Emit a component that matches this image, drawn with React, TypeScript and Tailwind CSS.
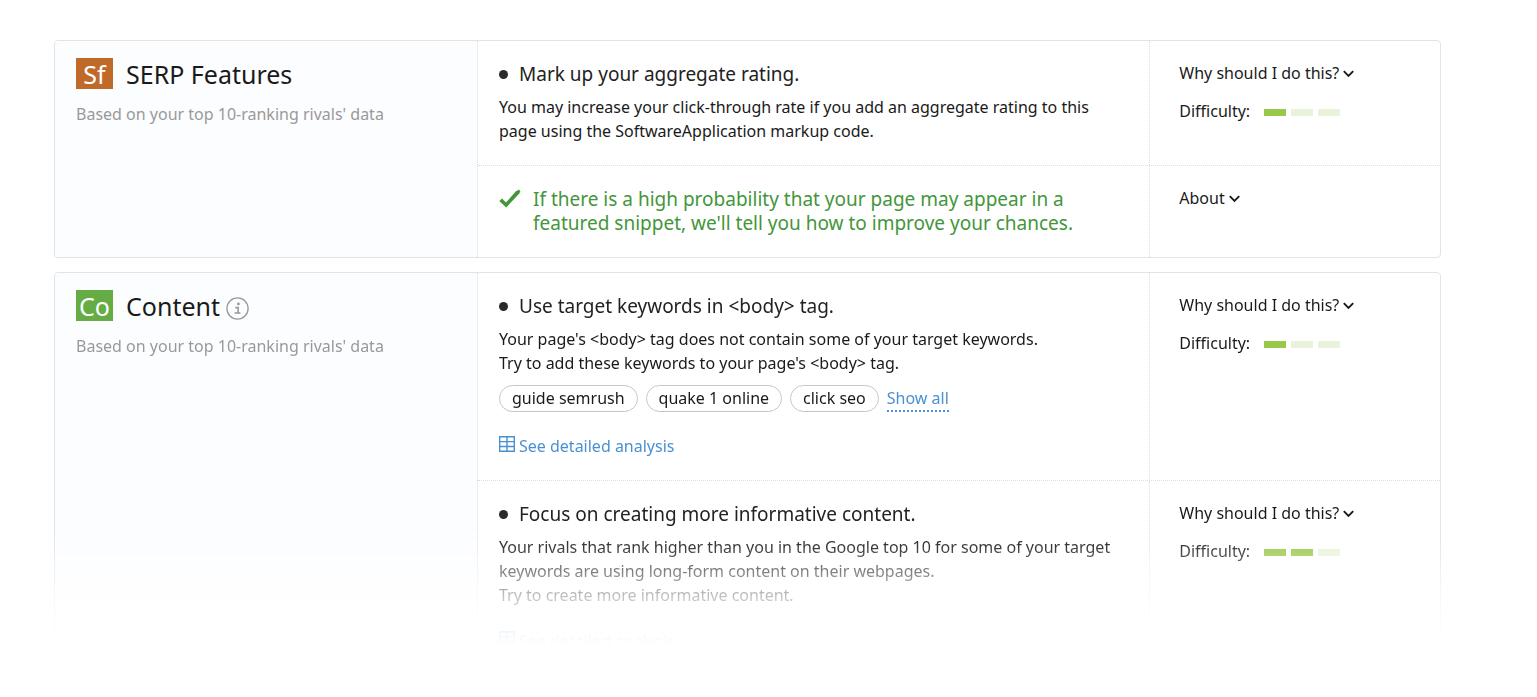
import type { ReactNode } from 'react';
import { clsx } from 'clsx';

interface IdeaRowProps {
  main: ReactNode;
  aside: ReactNode;
  last?: boolean;
}

function IdeaRow({ main, aside, last }: IdeaRowProps) {
  return (
    <div
      className={clsx(
        'grid grid-cols-[672fr_291fr] border-[#dcdede]',
        !last && 'border-b border-dotted'
      )}
    >
      <div className="pl-[21px] pr-5 pt-[21px] pb-[22px]">{main}</div>
      <div className="border-l border-dotted border-[#dcdede] pl-[29px] pr-4 pt-5">{aside}</div>
    </div>
  );
}

interface IdeaCardProps {
  badge: string;
  badgeColor: string;
  title: string;
  info?: boolean;
  children: ReactNode;
}

function IdeaCard({ badge, badgeColor, title, info, children }: IdeaCardProps) {
  return (
    <section className="grid grid-cols-[423fr_962fr] overflow-hidden rounded-[4px] border border-[#e2e4e4] bg-white">
      <div className="border-r border-dotted border-[#dcdede] bg-[#fcfdff] px-[21px] pt-[17px]">
        <div className="flex items-start gap-[13px]">
          <span
            className={clsx(
              'flex h-[31px] w-[37px] items-center justify-center text-[25px] leading-6 text-white',
              badgeColor
            )}
          >
            {badge}
          </span>
          <div className="flex items-center gap-1.5 pt-px">
            <h2 className="text-[25px] leading-[31px] text-[#1a1a1a]">{title}</h2>
            {info && (
              <button type="button" aria-label={`About ${title}`} className="mt-1">
                <InfoIcon />
              </button>
            )}
          </div>
        </div>
        <p className="mt-3 text-[16px] leading-6 text-[#999]">
          Based on your top 10-ranking rivals' data
        </p>
      </div>
      <div>{children}</div>
    </section>
  );
}

function InfoIcon() {
  return (
    <svg width="23" height="23" viewBox="0 0 23 23" fill="none" stroke="#999">
      <circle cx="11.5" cy="11.5" r="10.6" strokeWidth="1.3" />
      <circle cx="12.4" cy="6.9" r="1.4" fill="#999" stroke="none" />
      <path d="M9.2 10.6h2.9v4.9M8.6 16h5.8" strokeWidth="1.6" />
    </svg>
  );
}

function ChevronIcon() {
  return (
    <svg width="11" height="8" viewBox="0 0 11 8" fill="none" stroke="#1a1a1a" strokeWidth="1.9" className="mt-0.5">
      <path d="M.8 1.2 5.5 5.9l4.7-4.7" />
    </svg>
  );
}

function CheckIcon() {
  return (
    <svg width="22" height="19" viewBox="0 0 22 19" fill="#43963a" className="mt-0.5 shrink-0">
      <path d="M.3 12 3 9.6l4 3.8L17.4 1.8l.5.3L20 .4l1.5 2.4-1 .6.3.6L7.2 18.4z" />
    </svg>
  );
}

function TableIcon() {
  return (
    <svg width="16" height="16" viewBox="0 0 16 16" fill="none" stroke="#4a90d4" className="mb-1">
      <path d="M.7.7h14.6v14.6H.7z" strokeWidth="1.4" />
      <path d="M8 1v14M.7 5.6h14.6M.7 10.5h14.6" strokeWidth="1.4" />
    </svg>
  );
}

function IdeaTitle({ children }: { children: ReactNode }) {
  return (
    <h3 className="flex items-center gap-[11px] text-[19px] leading-6 text-[#222]">
      <span className="h-[9px] w-[9px] rounded-full bg-[#2b2b2d]" />
      {children}
    </h3>
  );
}

function Toggle({ label }: { label: string }) {
  return (
    <button type="button" className="flex items-center gap-1 text-[16px] leading-6">
      {label}
      <ChevronIcon />
    </button>
  );
}

function Difficulty({ level }: { level: number }) {
  return (
    <div className="mt-3.5 flex items-center gap-3.5 text-[16px] leading-6">
      Difficulty:
      <div className="mt-[3px] flex gap-[5px]">
        {[1, 2, 3].map((step) => (
          <span
            key={step}
            className={clsx('h-[7px] w-[22px]', step <= level ? 'bg-[#97c847]' : 'bg-[#e9f3da]')}
          />
        ))}
      </div>
    </div>
  );
}

function AnalysisLink() {
  return (
    <a href="#analysis" className="mt-[22px] flex w-fit items-center gap-1 text-[16px] leading-6 text-[#4a90d4]">
      <TableIcon />
      See detailed analysis
    </a>
  );
}

const keywords = ['guide semrush', 'quake 1 online', 'click seo'];

export default function App() {
  return (
    <main className="flex flex-col gap-3.5 bg-white pl-[54px] pr-24 pt-10 font-['Noto_Sans',sans-serif] text-[#1a1a1a]">
      <IdeaCard badge="Sf" badgeColor="bg-[#c06a2a]" title="SERP Features">
        <IdeaRow
          main={
            <>
              <IdeaTitle>Mark up your aggregate rating.</IdeaTitle>
              <p className="mt-[9px] text-[16px] leading-6">
                You may increase your click-through rate if you add an aggregate rating to this
                <br />
                page using the SoftwareApplication markup code.
              </p>
            </>
          }
          aside={
            <>
              <Toggle label="Why should I do this?" />
              <Difficulty level={1} />
            </>
          }
        />
        <IdeaRow
          last
          main={
            <div className="flex gap-3 text-[19px] leading-6 text-[#43963a]">
              <CheckIcon />
              <p>
                If there is a high probability that your page may appear in a
                <br />
                featured snippet, we'll tell you how to improve your chances.
              </p>
            </div>
          }
          aside={<Toggle label="About" />}
        />
      </IdeaCard>

      {/* Preview of the second card, fading out towards the bottom */}
      <div className="[mask-image:linear-gradient(to_top,transparent_30px,rgba(0,0,0,0.07)_42px,rgba(0,0,0,0.26)_78px,rgba(0,0,0,0.52)_102px,rgba(0,0,0,0.85)_128px,black_146px)]">
        <IdeaCard badge="Co" badgeColor="bg-[#65ac45]" title="Content" info>
          <IdeaRow
            main={
              <>
                <IdeaTitle>Use target keywords in &lt;body&gt; tag.</IdeaTitle>
                <p className="mt-[9px] text-[16px] leading-6">
                  Your page's &lt;body&gt; tag does not contain some of your target keywords.
                  <br />
                  Try to add these keywords to your page's &lt;body&gt; tag.
                </p>
                <div className="mt-2.5 flex items-center gap-2">
                  {keywords.map((keyword) => (
                    <span
                      key={keyword}
                      className="rounded-full border border-[#c4c6c6] px-3 text-[16px] leading-[25px]"
                    >
                      {keyword}
                    </span>
                  ))}
                  <button
                    type="button"
                    className="border-b-2 border-dotted border-[#4a90d4] text-[16px] leading-6 text-[#4a90d4]"
                  >
                    Show all
                  </button>
                </div>
                <AnalysisLink />
              </>
            }
            aside={
              <>
                <Toggle label="Why should I do this?" />
                <Difficulty level={1} />
              </>
            }
          />
          <IdeaRow
            last
            main={
              <>
                <IdeaTitle>Focus on creating more informative content.</IdeaTitle>
                <p className="mt-[9px] text-[16px] leading-6">
                  Your rivals that rank higher than you in the Google top 10 for some of your target
                  <br />
                  keywords are using long-form content on their webpages.
                  <br />
                  Try to create more informative content.
                </p>
                <AnalysisLink />
              </>
            }
            aside={
              <>
                <Toggle label="Why should I do this?" />
                <Difficulty level={2} />
              </>
            }
          />
        </IdeaCard>
      </div>
    </main>
  );
}
